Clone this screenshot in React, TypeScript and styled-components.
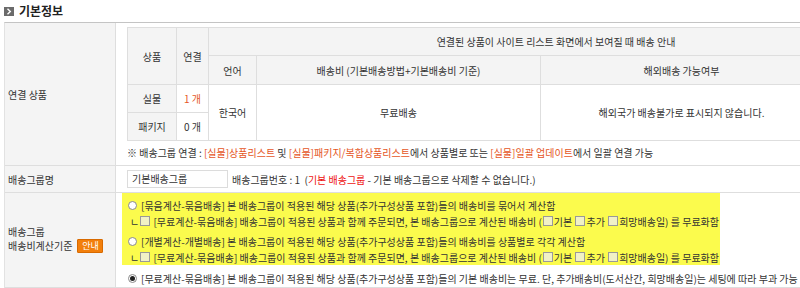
import React from "react";
import styled, { createGlobalStyle } from "styled-components";

const GlobalStyle = createGlobalStyle`
  html, body { margin: 0; padding: 0; background: #fff; overflow: hidden; }
  body {
    font-family: "Noto Sans CJK KR", "Noto Sans", sans-serif;
    font-size: 10px;
    color: #333;
  }
`;

const Page = styled.div`
  width: 920px;
  padding-left: 4px;
`;

const TitleBar = styled.div`
  display: flex;
  align-items: center;
  gap: 5px;
  height: 22px;
  padding-bottom: 1px;
  box-sizing: border-box;
`;

const TitleIcon = styled.span`
  width: 10px;
  height: 9px;
  background: #6b6b6b;
  display: inline-flex;
  align-items: center;
  justify-content: center;
  margin-top: 1px;
`;

const Title = styled.h2`
  margin: 0;
  font-size: 12px;
  line-height: 14px;
  font-weight: bold;
  color: #222;
`;

const Form = styled.div`
  display: grid;
  grid-template-columns: 111px 1fr;
  border-top: 1px solid #c4c4c4;
  border-left: 1px solid #e2e2e2;
`;

const Label = styled.div<{ $h: number; $lift?: number }>`
  background: #f4f4f4;
  border-bottom: 1px solid #dedede;
  border-right: 1px solid #dedede;
  display: flex;
  flex-direction: column;
  justify-content: center;
  padding: 0 0 ${(p) => p.$lift ?? 0}px 3px;
  height: ${(p) => p.$h}px;
  box-sizing: border-box;
`;

const LabelLine = styled.div`
  display: flex;
  align-items: center;
  height: 14px;
  line-height: 14px;
`;

const Field = styled.div<{ $h: number }>`
  border-bottom: 1px solid #dedede;
  height: ${(p) => p.$h}px;
  box-sizing: border-box;
`;

const LinkField = styled(Field)`
  padding: 4px 0 0 11px;
`;

const InnerTable = styled.table`
  border-collapse: collapse;
  width: 777px;
  text-align: center;
  table-layout: fixed;
  td, th {
    border: 1px solid #dedede;
    font-weight: normal;
    padding: 0;
    color: #333;
  }
  th { background: #f4f4f4; }
`;

const Orange = styled.span`
  color: #e5561e;
`;

const Red = styled.span`
  color: #ee1111;
`;

const Note = styled.div`
  margin-top: 4px;
  line-height: 16px;
`;

const NameField = styled(Field)`
  display: flex;
  align-items: center;
  gap: 4px;
  padding-left: 11px;
`;

const TextInput = styled.div`
  width: 101px;
  height: 18px;
  border: 1px solid #dcdcdc;
  box-sizing: border-box;
  display: flex;
  align-items: center;
  padding-left: 4px;
  margin-top: -1px;
`;

const GuideButton = styled.span`
  display: inline-flex;
  align-items: center;
  justify-content: center;
  width: 26px;
  height: 14px;
  box-sizing: border-box;
  background: #f27f0c;
  border: 1px solid #d86a00;
  color: #fff;
  font-size: 9px;
  line-height: 12px;
  margin-left: 5px;
  border-radius: 1px;
`;

const CalcField = styled(Field)`
  padding-left: 6px;
`;

const Highlight = styled.div`
  background: #fbfb4d;
  width: 598px;
  padding-top: 4px;
  height: 72px;
  box-sizing: border-box;
  display: flex;
  flex-direction: column;
  gap: 4px;
`;

const Option = styled.div`
  display: flex;
  flex-direction: column;
`;

const Line = styled.div<{ $sub?: boolean }>`
  display: flex;
  align-items: center;
  height: 16px;
  padding-left: ${(p) => (p.$sub ? 8 : 6)}px;
  white-space: pre;
`;

const Radio = styled.span<{ $on?: boolean }>`
  flex-shrink: 0;
  width: 9px;
  height: 9px;
  border: 1px solid #8a8a8a;
  border-radius: 50%;
  background: #fff;
  box-sizing: border-box;
  margin-right: 4px;
  display: inline-flex;
  align-items: center;
  justify-content: center;
  &::after {
    content: "";
    width: 5px;
    height: 5px;
    border-radius: 50%;
    background: ${(p) => (p.$on ? "#222" : "transparent")};
  }
`;

const Check = styled.span`
  flex-shrink: 0;
  width: 8px;
  height: 8px;
  border: 1px solid #999;
  background: #f1f1c6;
  display: inline-block;
  margin: 0 1px 0 1px;
`;

const LastLine = styled(Line)`
  margin-top: 5px;
`;

const Chevron = () => (
  <svg width="6" height="7" viewBox="0 0 6 7">
    <path d="M1.5 0.8 L4.3 3.5 L1.5 6.2" fill="none" stroke="#fff" strokeWidth="1.4" />
  </svg>
);

const FreeLine = () => (
  <Line $sub>
    <span>ㄴ</span>
    <Check />
    {" [무료계산-묶음배송] 배송그룹이 적용된 상품과 함께 주문되면, 본 배송그룹으로 계산된 배송비 ("}
    <Check />
    {"기본 "}
    <Check />
    {"추가 "}
    <Check />
    {"희망배송일) 를 무료화함"}
  </Line>
);

export default function App() {
  return (
    <Page>
      <GlobalStyle />
      <TitleBar>
        <TitleIcon>
          <Chevron />
        </TitleIcon>
        <Title>기본정보</Title>
      </TitleBar>
      <Form>
        <Label $h={143}>연결 상품</Label>
        <LinkField $h={143}>
          <InnerTable>
            <colgroup>
              <col style={{ width: 49 }} />
              <col style={{ width: 32 }} />
              <col style={{ width: 48 }} />
              <col style={{ width: 284 }} />
              <col style={{ width: 282 }} />
              <col />
            </colgroup>
            <tbody>
              <tr style={{ height: 28 }}>
                <th rowSpan={2}>상품</th>
                <th rowSpan={2}>연결</th>
                <th colSpan={4}>연결된 상품이 사이트 리스트 화면에서 보여질 때 배송 안내</th>
              </tr>
              <tr style={{ height: 29 }}>
                <th>언어</th>
                <th>배송비 (기본배송방법+기본배송비 기준)</th>
                <th>해외배송 가능여부</th>
                <th></th>
              </tr>
              <tr style={{ height: 28 }}>
                <th>실물</th>
                <td><Orange>1 개</Orange></td>
                <td rowSpan={2}>한국어</td>
                <td rowSpan={2}>무료배송</td>
                <td rowSpan={2}>해외국가 배송불가로 표시되지 않습니다.</td>
                <td rowSpan={2}></td>
              </tr>
              <tr style={{ height: 28 }}>
                <th>패키지</th>
                <td>0 개</td>
              </tr>
            </tbody>
          </InnerTable>
          <Note>
            ※ 배송그룹 연결 : <Orange>[실물]상품리스트</Orange> 및{" "}
            <Orange>[실물]패키지/복합상품리스트</Orange>에서 상품별로 또는{" "}
            <Orange>[실물]일괄 업데이트</Orange>에서 일괄 연결 가능
          </Note>
        </LinkField>

        <Label $h={27}>배송그룹명</Label>
        <NameField $h={27}>
          <TextInput>기본배송그룹</TextInput>
          <span>
            배송그룹번호 : 1 &nbsp;(<Red>기본 배송그룹</Red> - 기본 배송그룹으로 삭제할 수 없습니다.)
          </span>
        </NameField>

        <Label $h={95} $lift={3}>
          <LabelLine>배송그룹</LabelLine>
          <LabelLine>
            배송비계산기준<GuideButton>안내</GuideButton>
          </LabelLine>
        </Label>
        <CalcField $h={95}>
          <Highlight>
            <Option>
              <Line>
                <Radio />
                [묶음계산-묶음배송] 본 배송그룹이 적용된 해당 상품(추가구성상품 포함)들의 배송비를 묶어서 계산함
              </Line>
              <FreeLine />
            </Option>
            <Option>
              <Line>
                <Radio />
                [개별계산-개별배송] 본 배송그룹이 적용된 해당 상품(추가구성상품 포함)들의 배송비를 상품별로 각각 계산함
              </Line>
              <FreeLine />
            </Option>
          </Highlight>
          <LastLine>
            <Radio $on />
            [무료계산-묶음배송] 본 배송그룹이 적용된 해당 상품(추가구성상품 포함)들의 기본 배송비는 무료. 단, 추가배송비(도서산간, 희망배송일)는 세팅에 따라 부과 가능
          </LastLine>
        </CalcField>
      </Form>
    </Page>
  );
}
